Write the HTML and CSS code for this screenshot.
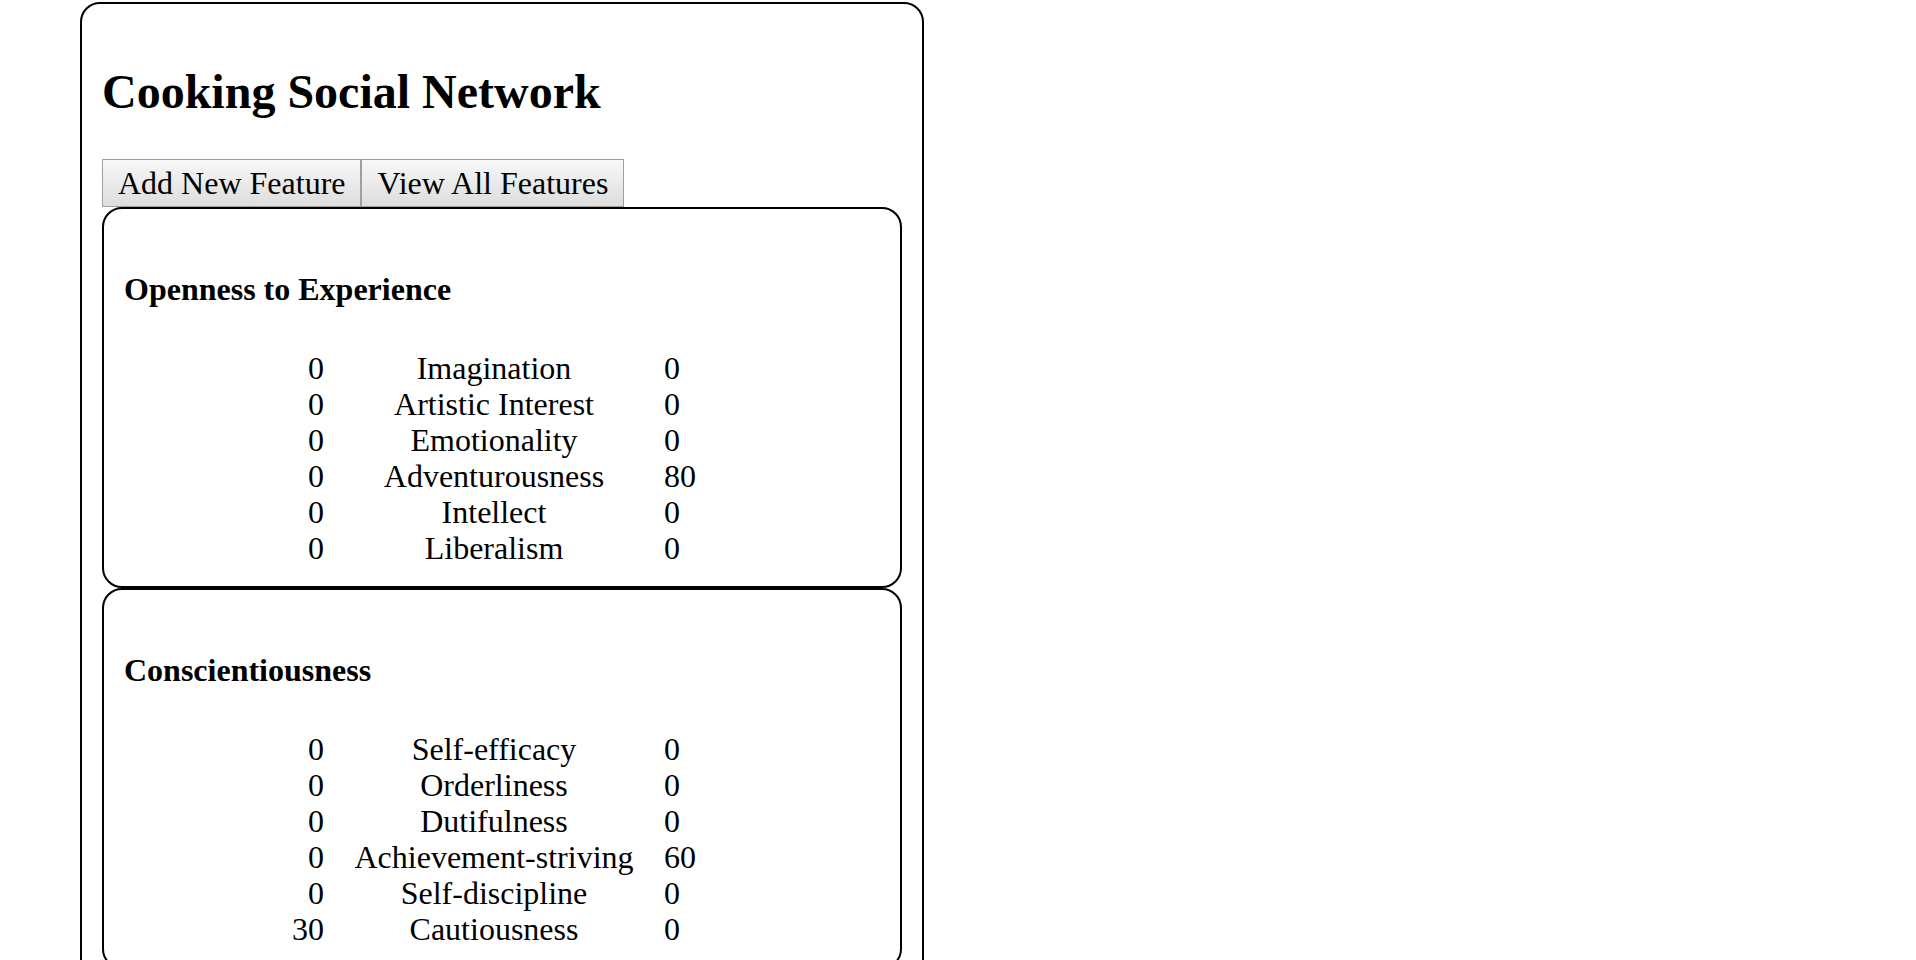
FILE: index.html
```html
<!DOCTYPE html>
<html lang="en">
<head>
<meta charset="utf-8">
<title>Cooking Social Network</title>
<link rel="stylesheet" href="styles.css">
</head>
<body>
<main class="card project">
  <h1 class="project-title">Cooking Social Network</h1>
  <div class="toolbar">
    <button type="button" class="tool-button">Add New Feature</button>
    <button type="button" class="tool-button">View All Features</button>
  </div>
  <section class="card">
    <h2 class="trait-title" id="openness">Openness to Experience</h2>
    <table class="facets" aria-labelledby="openness">
      <colgroup><col class="col-low"><col class="col-name"><col></colgroup>
      <tbody>
        <tr><td class="low">0</td><th scope="row">Imagination</th><td>0</td></tr>
        <tr><td class="low">0</td><th scope="row">Artistic Interest</th><td>0</td></tr>
        <tr><td class="low">0</td><th scope="row">Emotionality</th><td>0</td></tr>
        <tr><td class="low">0</td><th scope="row">Adventurousness</th><td>80</td></tr>
        <tr><td class="low">0</td><th scope="row">Intellect</th><td>0</td></tr>
        <tr><td class="low">0</td><th scope="row">Liberalism</th><td>0</td></tr>
      </tbody>
    </table>
  </section>
  <section class="card">
    <h2 class="trait-title" id="conscientiousness">Conscientiousness</h2>
    <table class="facets" aria-labelledby="conscientiousness">
      <colgroup><col class="col-low"><col class="col-name"><col></colgroup>
      <tbody>
        <tr><td class="low">0</td><th scope="row">Self-efficacy</th><td>0</td></tr>
        <tr><td class="low">0</td><th scope="row">Orderliness</th><td>0</td></tr>
        <tr><td class="low">0</td><th scope="row">Dutifulness</th><td>0</td></tr>
        <tr><td class="low">0</td><th scope="row">Achievement-striving</th><td>60</td></tr>
        <tr><td class="low">0</td><th scope="row">Self-discipline</th><td>0</td></tr>
        <tr><td class="low">30</td><th scope="row">Cautiousness</th><td>0</td></tr>
      </tbody>
    </table>
  </section>
</main>
</body>
</html>
```

FILE: styles.css
```css
body {
  margin: 2px 80px;
  background: #fff;
  color: #000;
  font: 32px/36px "Liberation Serif", "Times New Roman", serif;
}

.card {
  padding: 20px;
  border: 2px solid #000;
  border-radius: 20px;
}

.project {
  max-width: 800px;
}

.project-title {
  margin: 40px 0;
  font-size: 48px;
  line-height: 55px;
}

.toolbar {
  display: flex;
}

.tool-button {
  padding: 5px 15px;
  border: 1px solid #a0a0a0;
  border-radius: 0;
  background: linear-gradient(#f8f8f8, #ddd);
  color: inherit;
  font: inherit;
}

.trait-title {
  margin: 42px 0 43px;
  font-size: 32px;
}

.facets {
  width: 100%;
  table-layout: fixed;
  border-collapse: collapse;
}

.facets th,
.facets td {
  padding: 0;
  font-weight: normal;
}

.facets .low {
  text-align: right;
}

.col-low {
  width: 200px;
}

.col-name {
  width: 340px;
}
```
